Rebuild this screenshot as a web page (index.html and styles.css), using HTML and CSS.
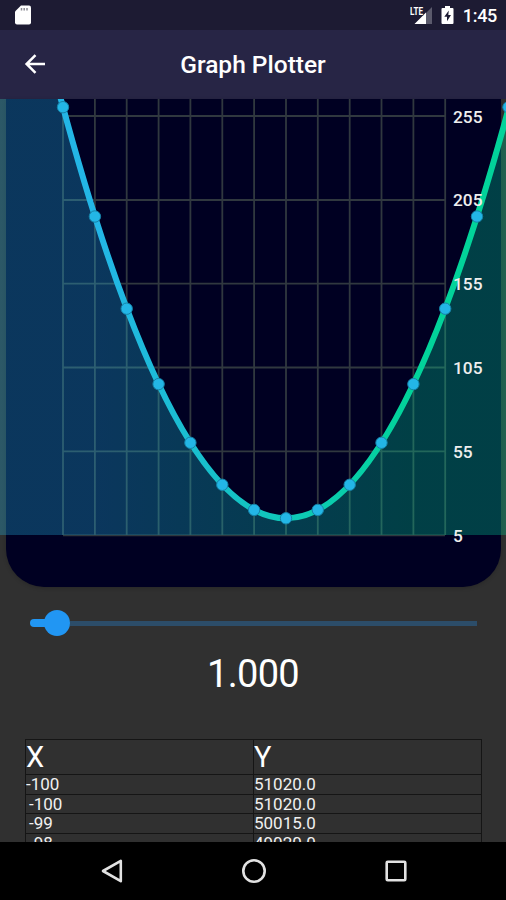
FILE: index.html
```html
<!DOCTYPE html>
<html lang="en">
  <head>
    <meta charset="UTF-8" />
    <meta name="viewport" content="width=device-width, initial-scale=1.0" />
    <title>Graph Plotter</title>
    <link rel="stylesheet" href="styles.css">
  </head>
  <body>
    <div class="screen">
      <div class="status-bar">
        <svg class="sd-icon" width="16" height="20" viewBox="0 0 16 20">
          <path d="M6 .5h8a2 2 0 0 1 2 2v15a2 2 0 0 1-2 2H2a2 2 0 0 1-2-2V6.500z" fill="#fff" />
          <path d="M6.500 3v2.500M9.200 3v2.500M12 3v2.500" stroke="#8a8a92" stroke-width="1.500" />
        </svg>
        <div class="status-right">
          <svg width="24" height="20" viewBox="0 0 24 20">
            <path d="M22 2v17H5z" fill="#5b5a6c" />
            <path d="M16 7.500V19H4.500z" fill="#fff" />
            <text class="lte" x="0" y="9.500" textLength="13" lengthAdjust="spacingAndGlyphs">LTE</text>
          </svg>
          <svg class="battery" width="13" height="20" viewBox="0 0 13 20">
            <path d="M4 1h5v2h2.500a1 1 0 0 1 1 1v14a1 1 0 0 1-1 1h-10a1 1 0 0 1-1-1V4a1 1 0 0 1 1-1H4z" fill="#fff" />
            <path d="M7.800 5.500L3.300 11.800h2.700v4.500l4-6.300H7.300z" fill="#1d1b33" />
          </svg>
          <span class="clock">1:45</span>
        </div>
      </div>

      <div class="app-bar">
        <svg class="back" width="22" height="20" viewBox="0 0 22 20">
          <path d="M21 10H2.500M11.500 1.200L2.600 10l8.900 8.800" fill="none" stroke="#fff" stroke-width="2.500" />
        </svg>
        <h1>Graph Plotter</h1>
      </div>

      <div class="chart">
        <div class="chart-card"></div>
        <svg class="plot" width="506" height="489" viewBox="0 99 506 489">
          <defs>
            <linearGradient id="line" gradientUnits="userSpaceOnUse" x1="63" y1="0" x2="445" y2="0">
              <stop offset="0.1" stop-color="#23b6e6" />
              <stop offset="0.9" stop-color="#02d39a" />
            </linearGradient>
          </defs>
          <!-- grid -->
          <path class="grid" d="M63 99V535M94.900 99V535M126.700 99V535M158.600 99V535M190.400 99V535M222.300 99V535M254.100 99V535M286 99V535M317.800 99V535M349.700 99V535M381.500 99V535M413.400 99V535M445.200 99V535" />
          <path class="grid" d="M63 116H445M63 200H445M63 283.700H445M63 367.500H445M63 451.400H445M63 535.300H445" />
          <!-- area and curve -->
          <path d="M-32.500 -320.700Q286 1357.300 604.500 -320.700V535H-32.500z" fill="url(#line)" opacity="0.3" />
          <path d="M-32.500 -320.700Q286 1357.300 604.500 -320.700" fill="none" stroke="url(#line)" stroke-width="6" />
          <g class="dots">
            <circle cx="63" cy="107.200" r="5.700" />
            <circle cx="94.900" cy="216.500" r="5.700" />
            <circle cx="126.700" cy="308.700" r="5.700" />
            <circle cx="158.600" cy="384.100" r="5.700" />
            <circle cx="190.400" cy="442.800" r="5.700" />
            <circle cx="222.300" cy="484.800" r="5.700" />
            <circle cx="254.100" cy="509.900" r="5.700" />
            <circle cx="286" cy="518.300" r="5.700" />
            <circle cx="317.800" cy="509.900" r="5.700" />
            <circle cx="349.700" cy="484.800" r="5.700" />
            <circle cx="381.500" cy="442.800" r="5.700" />
            <circle cx="413.400" cy="384.100" r="5.700" />
            <circle cx="445.200" cy="308.700" r="5.700" />
            <circle cx="477" cy="216.500" r="5.700" />
            <circle cx="508.500" cy="107.200" r="5.700" />
          </g>
          <g class="axis">
            <text x="453" y="122.500">255</text>
            <text x="453" y="206.300">205</text>
            <text x="453" y="290">155</text>
            <text x="453" y="373.800">105</text>
            <text x="453" y="457.700">55</text>
            <text x="453" y="541.500">5</text>
          </g>
        </svg>
      </div>

      <div class="slider">
        <div class="slider-active"></div>
        <div class="slider-thumb"></div>
        <div class="slider-track"></div>
      </div>
      <div class="value">1.000</div>

      <div class="table-wrap">
        <table>
          <tr class="head"><td>X</td><td>Y</td></tr>
          <tr><td>-100</td><td>51020.0</td></tr>
          <tr><td class="indent">-100</td><td>51020.0</td></tr>
          <tr><td class="indent">-99</td><td>50015.0</td></tr>
          <tr><td class="indent">-98</td><td>49020.0</td></tr>
        </table>
      </div>

      <div class="nav-bar">
        <svg width="22" height="24" viewBox="0 0 22 24">
          <path d="M19.800 1.800v20.400L2 12z" />
        </svg>
        <svg width="26" height="26" viewBox="0 0 26 26">
          <circle cx="13" cy="13" r="10.700" />
        </svg>
        <svg width="22" height="22" viewBox="0 0 22 22">
          <rect x="1.700" y="1.700" width="18.600" height="18.600" rx="1" />
        </svg>
      </div>
    </div>
  </body>
</html>
```
FILE: styles.css
```css
body {
  font-family: Roboto, sans-serif;
  background: #303030;
  color: #fff;
  margin: 0;
}

.screen {
  width: 506px;
  height: 900px;
  display: flex;
  flex-direction: column;
  overflow: hidden;
}

.status-bar {
  height: 30px;
  flex: none;
  box-sizing: border-box;
  padding: 0 9px 0 15px;
  background: #1d1b33;
  display: flex;
  justify-content: space-between;
  align-items: center;
}

.status-right {
  display: flex;
  align-items: center;
}

.lte {
  font-size: 10.5px;
  font-weight: 700;
  fill: #fff;
  stroke: #1d1b33;
  stroke-width: 1px;
  paint-order: stroke;
}

.battery {
  margin: 0 9px 0 7px;
}

.clock {
  font-size: 18px;
  font-weight: 500;
  line-height: 30px;
  letter-spacing: -0.3px;
  padding-top: 2px;
}

.app-bar {
  height: 69px;
  flex: none;
  background: #272545;
  display: grid;
  grid-template-columns: 60px 1fr 60px;
  align-items: center;
}

.back {
  margin: 0 0 1px 24px;
}

h1 {
  margin: 0;
  font-size: 24.5px;
  font-weight: 500;
  text-align: center;
}

.chart {
  height: 489px;
  flex: none;
  display: grid;
}

.chart-card,
.plot {
  grid-area: 1 / 1;
}

.chart-card {
  margin: 0 5px 1px 6px;
  background: #000022;
  border-radius: 0 0 38px 38px;
  box-shadow: 0 1px 4px rgba(0, 0, 0, 0.2);
}

.grid {
  fill: none;
  stroke: #30383f;
  stroke-width: 1.8;
}

.dots {
  fill: #23b6e6;
  stroke: #1682a8;
  stroke-width: 1;
}

.axis {
  font-size: 17.3px;
  font-weight: 500;
  fill: #eeeeee;
}

.slider {
  height: 26px;
  flex: none;
  margin: 22px 29px 0 30px;
  display: flex;
  align-items: center;
}

.slider-active {
  width: 15px;
  height: 8px;
  border-radius: 4px 0 0 4px;
  background: #2196f3;
}

.slider-thumb {
  width: 26px;
  height: 26px;
  margin-left: -1px;
  border-radius: 50%;
  background: #2196f3;
}

.slider-track {
  flex: 1;
  height: 5px;
  background: #2c4d69;
}

.value {
  height: 46px;
  flex: none;
  margin-top: 15px;
  font-size: 38px;
  line-height: 46px;
  letter-spacing: -0.7px;
  text-align: center;
}

.table-wrap {
  height: 103px;
  flex: none;
  margin: 42px 24px 0 25px;
  overflow: hidden;
}

table {
  width: 457px;
  table-layout: fixed;
  border-collapse: collapse;
}

tr {
  height: 19.7px;
}

td {
  padding: 1px 0 0;
  border: 1px solid #151515;
  font-size: 17px;
  line-height: 17.7px;
  color: #f0f0f0;
}

.head {
  height: 35px;
}

.head td {
  font-size: 29px;
  line-height: 33px;
  color: #fff;
}

.indent {
  padding-left: 3px;
}

.nav-bar {
  height: 58px;
  flex: none;
  background: #000;
  display: flex;
  justify-content: space-between;
  align-items: center;
  box-sizing: border-box;
  padding: 0 99px 0 101px;
}

.nav-bar svg {
  fill: none;
  stroke: #e2e2e2;
  stroke-width: 2.6;
  stroke-linejoin: round;
}
```
